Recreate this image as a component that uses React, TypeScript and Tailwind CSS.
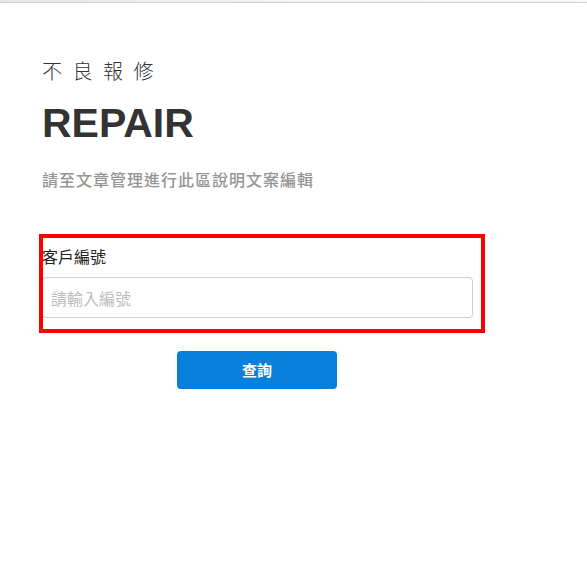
import { useState } from "react";

const cjk = "font-['Noto_Sans_CJK_TC','Liberation_Sans',sans-serif]";

export default function App() {
  const [code, setCode] = useState("");

  return (
    <div className="min-h-[585px] bg-white">
      <div className="h-[3px] border-b border-[#cfcfcf] bg-gradient-to-r from-[#e9e9e9] via-[#f3f3f3] to-[#fafafa]" />

      <main className="ml-[42px] flex w-[431px] flex-col pt-[54px]">
        <h2 className={`${cjk} text-[20px] leading-[28px] font-light tracking-[10.5px] text-[#333]`}>不良報修</h2>
        <h1 className="mt-[14px] font-['Liberation_Sans',sans-serif] text-[41px] leading-[48px] font-bold text-[#333]">
          REPAIR
        </h1>
        <p className={`${cjk} mt-[20px] text-[16px] leading-[24px] font-medium tracking-[1px] text-[#959595]`}>
          請至文章管理進行此區說明文案編輯
        </p>

        <form className="mt-[53px] flex flex-col" onSubmit={(event) => event.preventDefault()}>
          <div className="relative flex flex-col">
            <label className={`${cjk} text-[16px] leading-[24px] text-[#222]`} htmlFor="customer-code">
              客戶編號
            </label>
            <input
              className={`${cjk} mt-[9px] h-[41px] w-full rounded-[4px] border border-[#d0d0d0] bg-white px-[8px] text-[16px] text-[#333] outline-none placeholder:text-[#bdbdbd]`}
              id="customer-code"
              onChange={(event) => setCode(event.target.value)}
              placeholder="請輸入編號"
              value={code}
            />
            <span className="pointer-events-none absolute left-[-3px] top-[-10px] h-[99px] w-[446px] border-4 border-[#ff0000]" />
          </div>

          <button
            className={`${cjk} ml-[135px] mt-[33px] h-[38px] w-[160px] self-start rounded-[4px] bg-[#0780dc] text-[15px] font-bold text-white`}
            type="submit"
          >
            查詢
          </button>
        </form>
      </main>
    </div>
  );
}
